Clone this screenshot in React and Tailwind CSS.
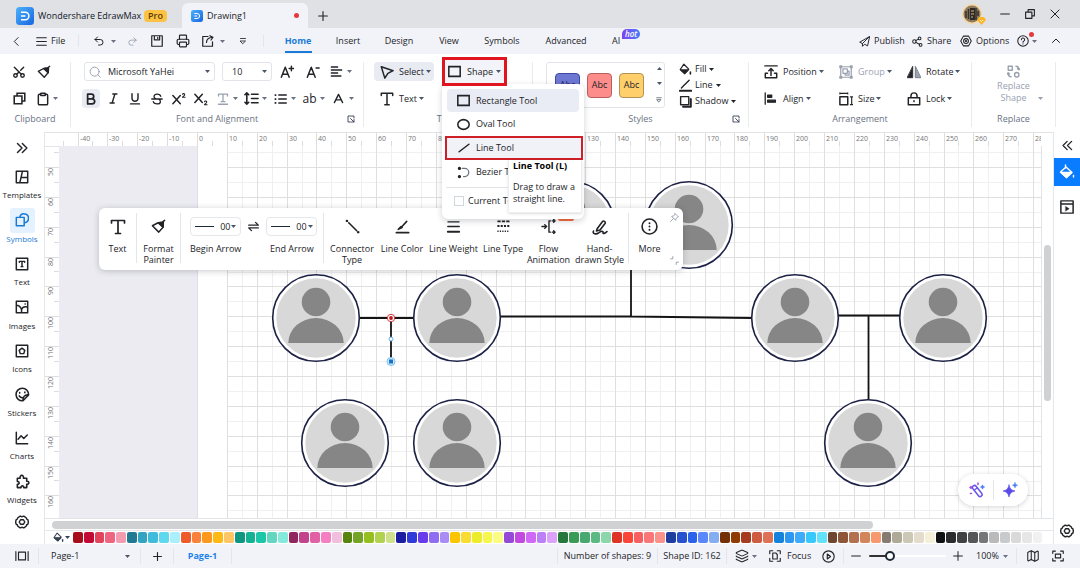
import React from 'react';
import clsx from 'clsx';
import { Undo2, Redo2, Printer, Layers, Map, Clipboard, Scissors } from 'lucide-react';

const Svg = ({ w = 14, box = 16, sw = 1.7, className, children }) => (
  <svg
    width={w}
    height={w}
    viewBox={`0 0 ${box} ${box}`}
    fill="none"
    stroke="currentColor"
    strokeWidth={sw}
    strokeLinecap="round"
    strokeLinejoin="round"
    className={clsx('shrink-0', className)}
    aria-hidden="true"
  >
    {children}
  </svg>
);

const Caret = ({ className }) => (
  <svg width="5" height="3" viewBox="0 0 5 3" className={clsx('shrink-0', className)} aria-hidden="true">
    <path d="M0 0h5L2.500 3z" fill="currentColor" />
  </svg>
);

const Divider = ({ className }) => <span className={clsx('w-px shrink-0 bg-[#e4e5ea]', className)} />;

/* ---------- icons ---------- */

const Logo = ({ size }) => (
  <svg width={size} height={size} viewBox="0 0 18 18" className="shrink-0" aria-hidden="true">
    <defs>
      <linearGradient id="logo" x1="0" y1="0" x2="1" y2="1">
        <stop offset="0" stopColor="#4db2fb" />
        <stop offset="1" stopColor="#1566e0" />
      </linearGradient>
    </defs>
    <rect width="18" height="18" rx="3.500" fill="url(#logo)" />
    <path d="M5 5.300h4.200a3.700 3.700 0 0 1 0 7.400H5M5 9h4.500" fill="none" stroke="#fff" strokeWidth="1.500" />
  </svg>
);

const HexGear = ({ w = 14 }) => (
  <Svg w={w} sw={1.600}>
    <path d="M5.500 1.500h1.200c.8.900 1.800.9 2.600 0h1.200l2.300 1.700c0 1.200.6 2 1.900 2.200l.6 2.600-.6 2.600c-1.300.2-1.900 1-1.900 2.200l-2.300 1.700H9.300c-.8-.9-1.800-.9-2.600 0H5.500l-2.300-1.700c0-1.200-.6-2-1.900-2.200L.7 8l.6-2.600c1.300-.2 1.900-1 1.900-2.200z" />
    <path d="M6.300 5.500h3.400L11.200 8l-1.500 2.500H6.300L4.800 8z" />
  </Svg>
);

const OptionsIcon = () => (
  <Svg w={12} sw={1.400}>
    <path d="M4.500 1.500h7L15 8l-3.500 6.500h-7L1 8z" />
    <circle cx="8" cy="8" r="3.200" />
    <circle cx="8" cy="8" r="0.800" />
  </Svg>
);

const Painter = ({ w = 14 }) => (
  <Svg w={w} sw={1.600}>
    <path d="M1.500 7.200 7.500 4l5.300 4.700L8.300 14 1.500 7.200z" />
    <path d="m8 4 4-.5 2.500-2M12.800 8.700l.2-4" />
    <path d="m8.500 4 4.300 4.500L13.200 3.500z" fill="currentColor" />
  </Svg>
);

const FillBucket = ({ w = 13 }) => (
  <Svg w={w} sw={1.500}>
    <path d="M6 1.500 12 7.500 7 13 1.500 8z" />
    <path d="M2 8.500h9.500L7 13z" fill="currentColor" />
    <path d="M14 11v2.500" strokeWidth="2" />
  </Svg>
);

const TextIcon = ({ w = 14 }) => (
  <Svg w={w} sw={1.700}>
    <path d="M1.500 4V1.500h13V4M8 1.500v13M5.500 14.500h5" />
  </Svg>
);

const LineHeightIcon = () => (
  <Svg w={15}>
    <path d="M3 2v12M1 4l2-2 2 2M1 12l2 2 2-2M8 3.500h7M8 8h7M8 12.500h7" />
  </Svg>
);

const BulletIcon = () => (
  <Svg w={14}>
    <path d="M5.500 3.500H14M5.500 8H14M5.500 12.500H14" />
    <path d="M1.500 3.500h.4M1.500 8h.4M1.500 12.500h.4" strokeWidth="2" />
  </Svg>
);

const AlignLines = () => (
  <Svg w={13} sw={1.900}>
    <path d="M1 2.500h9M1 6.200h14M1 9.800h9M1 13.500h13" strokeLinecap="butt" />
  </Svg>
);

const Launcher = () => (
  <Svg w={8} sw={1.800}>
    <path d="M7 14H2V2h12v4M7 7l7 7M14 9v5H9" />
  </Svg>
);

const CopyIcon = () => (
  <Svg w={13} sw={1.900}>
    <path d="M1.500 5h9.500v9.500H1.500zM5 5V1.500h9.500V11H11" strokeLinejoin="miter" />
  </Svg>
);

/* ---------- header ---------- */

const TitleBar = () => (
  <header className="flex h-7 items-end bg-[#e0e1e5]">
    <div className="flex h-7 w-[182px] items-center pl-4 pt-1">
      <Logo size={18} />
      <span className="ml-1 w-[106px] text-[9px] whitespace-nowrap text-gray-900">Wondershare EdrawMax</span>
      <span className="rounded-sm bg-[#fcc244] px-1 text-[9px] leading-3 font-semibold text-[#5c3b05]">Pro</span>
    </div>
    <div className="flex h-[25px] w-[126px] items-center rounded-t-md bg-[#f2f3f9] px-[9px]">
      <Logo size={12} />
      <span className="ml-1 text-[9px]">Drawing1</span>
      <span className="ml-auto size-[5px] rounded-full bg-[#e5393f]" />
    </div>
    <button aria-label="New tab" className="flex h-[25px] w-[30px] items-center justify-center">
      <Svg w={10} sw={1.800}><path d="M8 1v14M1 8h14" /></Svg>
    </button>
    <div className="ml-auto flex h-7 items-center pr-5">
      <span className="relative mr-[18px] size-5">
        <svg width="20" height="20" viewBox="0 0 20 20" aria-hidden="true">
          <circle cx="10" cy="10" r="10" fill="#f7d79b" />
          <circle cx="10" cy="10" r="8.500" fill="#8d7a60" />
          <path d="M4 7v7M6.500 5v10M14 4v12M16 7v5" stroke="#35312d" strokeWidth="1.500" />
          <path d="M8 4h5v12H8z" fill="#2e2a28" />
          <path d="M9 7h3M9 10h3M9 13h2" stroke="#d9b27a" />
        </svg>
        <svg width="9" height="8" viewBox="0 0 9 8" className="absolute -right-1 -bottom-px" aria-hidden="true">
          <path d="M2 0h5l2 3-4.500 5L0 3z" fill="#fdb52a" />
          <path d="m3 3 1.500 1.500L6 3" fill="none" stroke="#fff2c9" />
        </svg>
      </span>
      <div className="flex items-center gap-[15px]">
        <button aria-label="Minimize"><Svg w={10}><path d="M1 8h14" /></Svg></button>
        <button aria-label="Restore"><Svg w={10} sw={1.800}><path d="M1 5h10v10H1zM5 5V1h10v10h-4" /></Svg></button>
        <button aria-label="Close"><Svg w={10} sw={1.600}><path d="m1.500 1.500 13 13M14.500 1.500l-13 13" /></Svg></button>
      </div>
    </div>
  </header>
);

const TABS = [
  { name: 'Home', w: 'w-[50px]' },
  { name: 'Insert', w: 'w-[50px]' },
  { name: 'Design', w: 'w-[52px]' },
  { name: 'View', w: 'w-[48px]' },
  { name: 'Symbols', w: 'w-[58px]' },
  { name: 'Advanced', w: 'w-[70px]' },
];

const MenuBar = () => (
  <nav className="flex h-[26px] items-center bg-[#f2f3f9] text-[9px]">
    <button aria-label="Back" className="ml-3"><Svg w={9}><path d="M11 1 4 8l7 7" /></Svg></button>
    <button className="ml-[15px] flex w-[42px] items-center gap-1">
      <Svg w={11} sw={1.600}><path d="M1 2.500h14M1 8h14M1 13.500h14" /></Svg>
      File
    </button>
    <Divider className="h-3" />
    <div className="flex w-[184px] items-center pl-[14px]">
      <button aria-label="Undo" className="flex w-[34px] items-center gap-1.5"><Undo2 size={12} /><Caret className="text-gray-500" /></button>
      <button aria-label="Redo" className="w-[24px] text-gray-400"><Redo2 size={11} /></button>
      <button aria-label="Save" className="w-[25px]">
        <Svg w={12} sw={1.600}><path d="M1 1h14v14H1zM4.500 1v5.500h7V1M9 3v1.500" /></Svg>
      </button>
      <button aria-label="Print" className="w-[26px]"><Printer size={14} strokeWidth={2} /></button>
      <button aria-label="Export" className="flex w-[37px] items-center gap-1.5">
        <Svg w={12} sw={1.600}><path d="M8 2H1v13h13V9M6 10c0-4 3-6.500 8-7M10.500 1l4 2.200-2.500 3.500" /></Svg>
        <Caret className="text-gray-500" />
      </button>
      <button aria-label="Customize toolbar"><Svg w={8}><path d="M3 3h10M3 8h10l-5 5z" /></Svg></button>
    </div>
    <Divider className="h-3" />
    <div className="ml-[9px] flex h-full items-center">
      {TABS.map((tab, i) => (
        <button
          key={tab.name}
          className={clsx('relative flex h-full items-center justify-center', tab.w, i === 0 && 'font-bold text-[#1a7ad4]')}
        >
          {tab.name}
          {i === 0 && <span className="absolute bottom-px h-[2px] w-[27px] bg-[#1a7ad4]" />}
        </button>
      ))}
      <button className="relative ml-[11px]">
        AI
        <span className="absolute -top-[5px] left-[10px] rounded-full rounded-bl-none bg-linear-to-r from-[#7b3ff2] to-[#3d7bf7] px-[3px] text-[8px] leading-[10px] font-semibold text-white italic">hot</span>
      </button>
    </div>
    <div className="ml-auto flex items-center pr-5">
      <button className="flex w-[53px] items-center gap-1">
        <Svg w={11} sw={1.400}><path d="M15 1 1 9l4 2v4l3-3 4 2zM5 11l10-10" /></Svg>
        Publish
      </button>
      <button className="flex w-[48px] items-center gap-1">
        <Svg w={11} sw={1.500}>
          <circle cx="3.500" cy="8" r="2.500" /><circle cx="11" cy="3.500" r="2" /><circle cx="12.500" cy="13" r="2" />
          <path d="m5.500 6.800 3.800-2.200M5.500 9.300l5.200 2.700" />
        </Svg>
        Share
      </button>
      <button className="flex w-[57px] items-center gap-1"><OptionsIcon />Options</button>
      <button aria-label="Help" className="relative flex w-[35px] items-center gap-[3px]">
        <Svg w={12} sw={1.400}><circle cx="8" cy="8" r="7" /><path d="M5.800 6.200a2.200 2.200 0 1 1 3.200 2c-.7.300-1 .7-1 1.300M8 11.800v.2" /></Svg>
        <Caret className="text-gray-500" />
        <span className="absolute -top-[3px] left-3 size-[5px] rounded-full bg-[#e5393f]" />
      </button>
      <button aria-label="Collapse ribbon"><Svg w={8} sw={2}><path d="m1 11 7-7 7 7" /></Svg></button>
    </div>
  </nav>
);

/* ---------- ribbon ---------- */

const Group = ({ label, className, launcher, children }) => (
  <section className={clsx('relative flex shrink-0 flex-col border-r border-[#e9eaee]', className)}>
    <div className="flex-1">{children}</div>
    <div className="flex h-4 items-center justify-center text-[9px] text-gray-500">{label}</div>
    {launcher && <button aria-label={`${label} settings`} className="absolute right-2 bottom-1 text-gray-700"><Launcher /></button>}
  </section>
);

const Cell = ({ label, className, children }) => (
  <button aria-label={label} className={clsx('flex h-[19px] items-center justify-center rounded-sm', className)}>{children}</button>
);

const CaretCell = ({ label, className, children }) => (
  <button aria-label={label} className={clsx('flex h-[19px] w-6 items-center', className)}>
    <span className="flex w-[17px] items-center justify-center">{children}</span>
    <Caret className="ml-0.5 text-gray-500" />
  </button>
);

const LabelButton = ({ icon, text, className }) => (
  <button className={clsx('flex h-[19px] items-center gap-[5px] text-[9px] whitespace-nowrap', className)}>
    <span className="flex w-[15px] justify-center">{icon}</span>
    <span className="flex items-center gap-0.5">{text}<Caret className="text-gray-600" /></span>
  </button>
);

const ClipboardGroup = () => (
  <Group label="Clipboard" className="w-[71px]">
    <div className="flex gap-[5px] pl-[9px]">
      <Cell label="Cut" className="w-5"><Scissors size={14} strokeWidth={2.400} className="-rotate-90" /></Cell>
      <Cell label="Format painter" className="w-5"><Painter /></Cell>
    </div>
    <div className="mt-2 flex gap-[5px] pl-[9px]">
      <Cell label="Copy" className="w-5"><CopyIcon /></Cell>
      <CaretCell label="Paste"><Clipboard size={14} strokeWidth={2.500} /></CaretCell>
    </div>
  </Group>
);

const FontGroup = () => (
  <Group label="Font and Alignment" className="w-[293px]" launcher>
    <div className="flex items-center pl-[13px]">
      <label className="relative flex h-[19px] w-[131px] items-center rounded-[3px] border border-[#e3e4e9]">
        <Svg w={12} sw={1.300} className="ml-1 text-gray-400"><circle cx="7.500" cy="7.500" r="6" /><path d="m12 12 3 3" /></Svg>
        <select aria-label="Font family" className="w-full appearance-none pl-[7px] text-[9px] outline-none">
          <option>Microsoft YaHei</option>
        </select>
        <Caret className="absolute right-1 text-gray-600" />
      </label>
      <label className="relative ml-[7px] flex h-[19px] w-[50px] items-center rounded-[3px] border border-[#e3e4e9]">
        <select aria-label="Font size" className="w-full appearance-none pl-[9px] text-[9px] outline-none">
          <option>10</option>
        </select>
        <Caret className="absolute right-1 text-gray-600" />
      </label>
      <Cell label="Increase font size" className="ml-1 w-[22px]">
        <Svg w={14}><path d="m1.500 14 4.500-11.500L10.500 14M3 10.500h6M13 1.500v5M10.500 4h5" /></Svg>
      </Cell>
      <Cell label="Decrease font size" className="ml-1 w-[22px]">
        <Svg w={14}><path d="m1.500 14 4.500-11.500L10.500 14M3 10.500h6M11.500 3.500H15" /></Svg>
      </Cell>
      <CaretCell label="Alignment" className="ml-1"><AlignLines /></CaretCell>
    </div>
    <div className="mt-2 flex items-center pl-[11px]">
      <Cell label="Bold" className="mr-0.5 w-[18px] bg-[#e9ebf3]">
        <Svg w={12} sw={2.300}><path d="M3.500 1.500h5a3 3 0 0 1 0 6.200h-5zM3.500 7.700h6a3.400 3.400 0 0 1 0 6.800h-6z" /></Svg>
      </Cell>
      <Cell label="Italic" className="w-[22px]"><Svg w={11} sw={2}><path d="M7 1.500h6M3 14.500h6M10 1.500l-4 13" /></Svg></Cell>
      <Cell label="Underline" className="w-[22px]"><Svg w={12} sw={1.900}><path d="M4 1v6a4 4 0 0 0 8 0V1M2 14.500h12" /></Svg></Cell>
      <Cell label="Strikethrough" className="w-[22px]">
        <Svg w={12} sw={1.700}><path d="M13 4.500C12 .5 4 .5 4 4.500c0 2 2 3 4 3.500M1 8h14M3 11.500c1 4 9.500 4 9.500 0 0-1.500-.5-2.300-1.500-3" /></Svg>
      </Cell>
      <Cell label="Superscript" className="w-[22px]">
        <Svg w={14}><path d="m1 4 8.500 9.500M9.500 4 1 13.500" /><path d="M12 2.700c.5-1.400 2.800-1 2.500.5-.2 1-1.500 1.600-2.500 2.800h3" strokeWidth="1.200" /></Svg>
      </Cell>
      <Cell label="Subscript" className="mr-0.5 w-[22px]">
        <Svg w={14}><path d="m1 2.500 8.500 9.500M9.500 2.500 1 12" /><path d="M12 11.200c.5-1.400 2.800-1 2.500.5-.2 1-1.500 1.600-2.500 2.800h3" strokeWidth="1.200" /></Svg>
      </Cell>
      <div className="flex gap-[5px]">
        <CaretCell label="Text effect" className="text-gray-400"><Svg w={12}><path d="M2 4V1.500h12V4M8 1.500v10M5.500 11.500h5M2 15h12" /></Svg></CaretCell>
        <CaretCell label="Line spacing"><LineHeightIcon /></CaretCell>
        <CaretCell label="Bullets"><BulletIcon /></CaretCell>
        <CaretCell label="Letter case"><span className="text-xs">ab</span></CaretCell>
        <CaretCell label="Font color"><Svg w={11} sw={2}><path d="m2 14 6-12 6 12M4 10h8" /></Svg></CaretCell>
      </div>
    </div>
  </Group>
);

const RectIcon = () => <Svg w={13} sw={1.900}><path d="M1 2h14v12H1z" strokeLinejoin="miter" /></Svg>;

const SHAPE_MENU = [
  { text: 'Oval Tool', icon: <Svg w={13} sw={1.900}><ellipse cx="8" cy="8" rx="7" ry="6" /></Svg> },
  { text: 'Line Tool', icon: <Svg w={12} sw={2}><path d="M1.500 13 14.500 3" /></Svg>, marked: true },
  {
    text: 'Bezier Tool',
    icon: (
      <Svg w={13} sw={1.500}>
        <path d="M6.500 3H9.500a5 5 0 0 1 0 10H8" className="text-gray-500" stroke="currentColor" />
        <circle cx="3" cy="3" r="1.300" fill="currentColor" /><circle cx="3" cy="13" r="1.300" fill="currentColor" />
      </Svg>
    ),
  },
];

const ShapeMenu = () => (
  <div className="absolute top-[27px] left-0 w-[142px] rounded-md bg-white pt-[5px] shadow-[0_2px_6px_rgba(40,44,60,0.22)]">
    <button className="mx-[5px] flex h-[23px] w-[132px] items-center gap-1.5 rounded-sm bg-[#eaecf5] pl-[10px]"><RectIcon />Rectangle Tool</button>
    {SHAPE_MENU.map((item) => (
      <button
        key={item.text}
        className={clsx(
          'flex h-6 items-center whitespace-nowrap',
          item.marked
            ? 'ml-[3px] w-[138px] gap-1.5 border-2 border-[#cf2027] bg-[#f1f2f8] pl-[11px]'
            : 'w-full gap-1.5 pl-[15px]'
        )}
      >
        {item.icon}
        {item.text}
      </button>
    ))}
    <div className="mx-1 mt-[3px] border-t border-[#e3e4e8]" />
    <label className="flex h-[25px] items-center gap-1 pl-3 whitespace-nowrap">
      <input type="checkbox" className="size-[10px] appearance-none border border-gray-300 bg-white" />
      Current Tool
    </label>
    <div className="h-1.5" />
    <div role="tooltip" className="absolute top-[76px] left-[66px] h-[53px] w-[74px] border border-t-0 border-[#eceef2] bg-white pl-[4px] text-[9px] leading-3 shadow-sm">
      <div className="font-bold whitespace-nowrap text-black">Line Tool (L)</div>
      <div className="mt-[9px] whitespace-nowrap">Drag to draw a<br />straight line.</div>
    </div>
  </div>
);

const ToolsGroup = () => (
  <Group label="Tools" className="w-[169px]">
    <div className="flex">
      <div className="ml-[10px] flex flex-col gap-2">
        <LabelButton
          text="Select"
          className="w-[60px] rounded-sm bg-[#e9ebf3] pl-[5px]"
          icon={<Svg w={14}><path d="M1.500 2 15 6.500 9 9.500 5.500 15z" /></Svg>}
        />
        <LabelButton text="Text" className="pl-[5px]" icon={<TextIcon />} />
      </div>
      <div className="relative z-30 -mt-[5px] ml-2 h-[29px] w-[65px] text-[9px]">
        <button className="relative z-10 flex h-[29px] w-[65px] items-center gap-1.5 border-[3px] border-[#e0151f] bg-[#f3f4f9] pl-[3px]">
          <RectIcon />
          <span className="flex items-center gap-[3px]">Shape<Caret className="text-gray-600" /></span>
        </button>
        <ShapeMenu />
      </div>
    </div>
  </Group>
);

const StylesGroup = () => (
  <Group label="Styles" className="w-[216px]" launcher>
    <div className="flex">
      <div className="ml-[13px] flex h-[46px] w-[119px] items-center gap-[7px] rounded-[3px] border border-[#e3e4e9] pl-2 text-[9px]">
        <button className="size-[25px] shrink-0 rounded border border-[#3d4aa5] bg-[#6c78d2] text-[#1d2460]">Abc</button>
        <button className="size-[25px] shrink-0 rounded border border-[#b9605f] bg-[#fc8d8b]">Abc</button>
        <button className="size-[25px] shrink-0 rounded border border-[#b39352] bg-[#ffcf6c]">Abc</button>
        <div className="ml-[5px] flex flex-col items-center gap-3 text-gray-600">
          <Caret className="rotate-180" />
          <Caret />
          <Svg w={6} sw={2}><path d="M2 2h12M3 7h10l-5 6z" /></Svg>
        </div>
      </div>
      <div className="-mt-px ml-[14px] flex flex-col">
        <button className="flex h-4 items-center gap-[3px] text-[9px]"><FillBucket />Fill<Caret /></button>
        <button className="flex h-4 items-center gap-[3px] text-[9px]">
          <Svg w={13}><path d="M5 9 12.500 1.500M3 11l2-2" /><path d="M1 14.500h14" strokeWidth="2.500" /></Svg>
          Line<Caret />
        </button>
        <button className="flex h-4 items-center gap-[3px] text-[9px]">
          <Svg w={13}><path d="M2 2h10v10H2z" /><path d="M5 14.500h9.500V5" strokeWidth="2.500" /></Svg>
          Shadow<Caret />
        </button>
      </div>
    </div>
  </Group>
);

const ArrangeGroup = () => (
  <Group label="Arrangement" className="w-[223px]">
    <div className="grid grid-cols-[75px_68px_1fr] gap-y-2 pl-[14px]">
      <LabelButton
        text="Position"
        icon={<Svg w={14}><path d="M1 1h14M8 12V4M5.500 6.500 8 4l2.500 2.500M4 9.500H1.500v5h13v-5H12" /></Svg>}
      />
      <LabelButton
        text="Group"
        className="text-gray-400"
        icon={<Svg w={14} sw={1.400}><path d="M2 2h12v12H2zM1 1h2v2H1zM13 1h2v2h-2zM1 13h2v2H1zM13 13h2v2h-2zM4.500 4.500h5v5h-5zM7 9.500v2h4.500V7h-2" /></Svg>}
      />
      <LabelButton
        text="Rotate"
        icon={<Svg w={14} sw={1}><path d="M6.500 2v12.500h-6z" fill="currentColor" /><path d="M9.500 2v12.500h6z" fill="#9ca3af" stroke="#6b7280" /></Svg>}
      />
      <LabelButton
        text="Align"
        icon={<Svg w={13} sw={1.600}><path d="M1.500 1v14" /><path d="M4.500 4h5v2.500h-5zM4.500 10h9.500v2.500H4.500z" fill="currentColor" /></Svg>}
      />
      <LabelButton
        text="Size"
        icon={<Svg w={14}><path d="M1 5.500h9v9H1z" /><path d="M1 1.500h9M1 .8v1.500M10 .8v1.500M13 5.500h3M13 14.500h3M14.500 5.500v9" strokeWidth="1.300" /></Svg>}
      />
      <LabelButton
        text="Lock"
        icon={<Svg w={14}><path d="M1.500 6.500h13v8h-13zM4.500 6.500v-2a3.500 3.500 0 0 1 7 0v2M8 10v1" /></Svg>}
      />
    </div>
  </Group>
);

const ReplaceGroup = () => (
  <Group label="Replace" className="w-[84px]">
    <button className="relative flex w-full flex-col items-center pt-[3px] text-[9px] leading-3 text-gray-400">
      <Svg w={13} className="mb-0.5">
        <path d="M1.500 1.500h5v5h-5zM11 1.500c2 0 3.500 1 3.500 4M13 4.500l1.500 1.500L16 4.500M5 14.500c-2 0-3.500-1-3.500-4M0 11l1.500-1.500L3 11" />
        <circle cx="12" cy="12" r="2.700" />
      </Svg>
      Replace
      <span>Shape</span>
      <Caret className="absolute right-3 bottom-1" />
    </button>
  </Group>
);

const Ribbon = () => (
  <div className="relative z-30 flex h-[78px] bg-white pt-2 pb-[5px]">
    <ClipboardGroup />
    <FontGroup />
    <ToolsGroup />
    <StylesGroup />
    <ArrangeGroup />
    <ReplaceGroup />
  </div>
);

/* ---------- side bars ---------- */

const SIDE_ITEMS = [
  { name: 'Templates', icon: <Svg w={14}><path d="M1.500 1.500h13v13h-13zM8.500 1.500l-3 13M7 8.500h7.500" /></Svg> },
  { name: 'Symbols', icon: <Svg w={14}><path d="M1.500 5h9v9.500h-9zM5.500 5a5 5 0 1 1 5 6" /></Svg> },
  { name: 'Text', icon: <Svg w={14}><path d="M1.500 1.500h13v13h-13z" /><path d="M5 6V5h6v1M8 5v6M7 11h2" /></Svg> },
  { name: 'Images', icon: <Svg w={14}><path d="M1.500 1.500h13v13h-13zM1.500 6c4 0 5 2 6 5 1-3 3-4 7-3M7.500 11v3.500M11.500 4.500h.2" /></Svg> },
  { name: 'Icons', icon: <Svg w={14}><path d="M1.500 1.500h13v13h-13z" /><path d="m8 4.800 3.200 2.400L10 11H6L4.800 7.200z" /></Svg> },
  {
    name: 'Stickers',
    icon: <Svg w={15}><path d="M14.500 8.500A6.700 6.700 0 1 0 8.500 14.700M14.500 8.500c-4-.5-6.500 2-6 6.200l6-6.200M5 6v.5M10.500 5.500v.5M4.500 9.500c.8 1.500 2 2 3.500 2" /></Svg>,
  },
  { name: 'Charts', icon: <Svg w={14}><path d="M1.500 1.500v13h13M3.500 9.500l3.500-4L10 8.500l4-4" /></Svg> },
  {
    name: 'Widgets',
    icon: <Svg w={15}><path d="M2.500 4.500h3c-1-4 4.500-4 3.500 0h3.500v3.300c3-.5 3 3.700 0 3.200v3.500H9.200c.3-2.500-3-2.500-2.700 0H2.500v-3.500c2.500.3 2.500-3.200 0-3z" /></Svg>,
  },
];

const SideBar = () => (
  <aside className="flex w-[45px] shrink-0 flex-col items-center border-r border-[#e6e7eb] bg-white">
    <button aria-label="Expand panel" className="flex h-8 items-center">
      <Svg w={12} sw={1.900}><path d="m2 2 6 6-6 6M8.500 2l6 6-6 6" /></Svg>
    </button>
    <div className="flex w-full flex-1 flex-col">
      {SIDE_ITEMS.map(({ name, icon }) => (
        <button key={name} className={clsx('flex flex-1 flex-col items-center text-[8px] leading-[11px]', name === 'Symbols' && 'text-[#1a7ad4]')}>
          <span className={clsx('flex size-[25px] items-center justify-center rounded-[3px]', name === 'Symbols' && 'bg-[#e4f1fe]')}>{icon}</span>
          {name}
        </button>
      ))}
    </div>
    <button aria-label="Settings" className="flex h-8 pt-[3px]"><HexGear /></button>
  </aside>
);

const RightBar = () => (
  <aside className="flex w-[27px] shrink-0 flex-col items-center border-l border-[#e6e7eb] bg-white">
    <button aria-label="Collapse panel" className="flex h-[26px] items-center">
      <Svg w={11} sw={1.900}><path d="m7.500 2-6 6 6 6M14 2 8 8l6 6" /></Svg>
    </button>
    <button aria-label="Style" className="flex h-7 w-full items-center justify-center bg-[#0a7cff] text-white">
      <Svg w={16} sw={1.400}><path d="M6.500 1v3M7 3l6 5.500-5.500 5L1.500 8z" /><path d="M2 8.500h10.500l-5 5z" fill="currentColor" /><path d="M14.500 11.500v1.500" /></Svg>
    </button>
    <button aria-label="Slideshow" className="mt-3.5">
      <Svg w={14}><path d="M1 1h14v14H1zM1 4.500h14" /><path d="m6.500 7.500 4 2.500-4 2.500z" fill="currentColor" strokeWidth="0.500" /></Svg>
    </button>
    <button aria-label="Panel settings" className="mt-auto mb-1.5"><HexGear /></button>
  </aside>
);

/* ---------- canvas ---------- */

const STEP = 29.860;
const ORIGIN_X = 138;
const ORIGIN_Y = 21;
const range = (from, to) => Array.from({ length: to - from }, (_, i) => from + i);

const TopRuler = () => (
  <div className="border-t border-[#e3e4e8] bg-white pr-3">
    <svg className="block h-[13px] w-full" aria-hidden="true">
      {range(-5, 29).map((n) => {
        const x = Math.round(152 + n * STEP);
        const mid = Math.round(152 + (n + 0.5) * STEP);
        return (
          <g key={n}>
            {x > 14 && <path d={`M${x}.5 0v14`} stroke="#dcdde1" />}
            {mid > 14 && <path d={`M${mid}.5 8v6`} stroke="#dcdde1" />}
            {n > -5 && <text x={x + 2} y="8" className="fill-[#777] text-[7px]">{n * 10}</text>}
          </g>
        );
      })}
    </svg>
  </div>
);

const LeftRuler = () => (
  <svg className="h-full w-3.5 shrink-0 border-t border-[#e3e4e8] bg-white" aria-hidden="true">
    {range(0, 12).map((n) => {
      const y = Math.round(ORIGIN_Y - 1 + n * STEP);
      return (
        <g key={n}>
          <path d={`M0 ${y}.5h14M9 ${y - 15}.5h5`} stroke="#dcdde1" />
          <text transform={`translate(8 ${y + 1}) rotate(-90)`} textAnchor="end" className="fill-[#777] text-[7px]">{50 + n * 10}</text>
        </g>
      );
    })}
  </svg>
);

const PEOPLE = [
  [512, 79], [630, 79],
  [257, 172], [398, 172], [736, 172], [884, 172],
  [286, 297], [398, 297], [809, 297],
];

const Person = ({ x, y }) => (
  <g transform={`translate(${x} ${y})`}>
    <circle r="43.300" fill="#fff" stroke="#1d2145" strokeWidth="1.600" />
    <circle r="39.700" fill="#d8d8d8" />
    <circle cy="-16" r="14.300" fill="#868686" />
    <path d="M-27.700 25A27.700 25 0 0 1 27.700 25z" fill="#868686" />
  </g>
);

const Drawing = () => (
  <svg className="block h-full w-full bg-[#ebebf1]" role="img" aria-label="Family tree">
    <rect x={ORIGIN_X} width="100%" height="100%" fill="#fff" />
    <path d={`M${ORIGIN_X}.5 0v2000`} stroke="#dedfe4" />
    {range(1, 60).map((n) => (
      <path key={`mv${n}`} d={`M${Math.round(ORIGIN_X + (n + 0.5) * STEP)}.5 0v2000`} stroke="#f0f0f0" />
    ))}
    {range(-1, 40).map((n) => (
      <path key={`mh${n}`} d={`M168 ${Math.round(ORIGIN_Y + (n + 0.5) * STEP)}.5h3000`} stroke="#f0f0f0" />
    ))}
    {range(1, 60).map((n) => (
      <path key={`v${n}`} d={`M${Math.round(ORIGIN_X + n * STEP)}.5 0v2000`} stroke="#dfdfdf" />
    ))}
    {range(0, 40).map((n) => (
      <path key={`h${n}`} d={`M168 ${Math.round(ORIGIN_Y + n * STEP)}.5h3000`} stroke="#dfdfdf" />
    ))}
    <g stroke="#141414" strokeWidth="1.800" fill="none">
      <path d="M300 172h56M440 170.500h132L694 172M572 90v80M778 169.500h64M809.500 170v84M332 172v43" />
    </g>
    {PEOPLE.map(([x, y]) => <Person key={`${x}-${y}`} x={x} y={y} />)}
    <circle cx="332" cy="172" r="3.700" fill="#fff" stroke="#d2383d" />
    <circle cx="332" cy="172" r="1.900" fill="#c4161c" />
    <circle cx="332" cy="193" r="2" fill="#fff" stroke="#5db0ea" />
    <circle cx="332" cy="215.500" r="4" fill="#cfe8fb" stroke="#7cc0f2" />
    <path d="M330 213.500h4v4h-4z" fill="#1673c9" />
  </svg>
);

const ArrowPicker = ({ label }) => (
  <div className="flex flex-col items-center">
    <button aria-label={label} className="flex h-[19px] w-[51px] items-center rounded border border-[#e6e7eb] pl-[4px]">
      <span className="h-px w-[19px] bg-gray-800" />
      <span className="ml-[6px] mr-px">00</span>
      <Caret className="text-gray-600" />
    </button>
    <span className="mt-[7px] whitespace-nowrap">{label}</span>
  </div>
);

const FloatItem = ({ icon, lines, className }) => (
  <button className={clsx('relative flex shrink-0 flex-col items-center', className)}>
    <span className="flex h-[19px] items-center">{icon}</span>
    <span className="mt-[7px] flex flex-col items-center whitespace-nowrap">
      {lines.map((line) => <span key={line}>{line}</span>)}
    </span>
  </button>
);

const FloatingToolbar = () => (
  <div className="absolute top-[76px] left-[54px] z-20 flex w-[584px] rounded-md bg-white pt-[9px] pb-[5px] text-[9px] leading-[11px] shadow-[0_1px_6px_rgba(40,44,60,0.25)]">
    <FloatItem className="w-[37px]" lines={['Text']} icon={<TextIcon w={16} />} />
    <Divider className="-mt-1 h-[50px]" />
    <FloatItem className="w-[43px]" lines={['Format', 'Painter']} icon={<Painter w={15} />} />
    <Divider className="-mt-1 h-[50px]" />
    <div className="flex w-[142px] pl-[9px]">
      <ArrowPicker label="Begin Arrow" />
      <button aria-label="Swap arrows" className="flex h-[19px] w-[25px] items-center justify-center">
        <Svg w={11} sw={1.900}><path d="M1 6h14l-4-4M15 10H1l4 4" /></Svg>
      </button>
      <ArrowPicker label="End Arrow" />
    </div>
    <Divider className="-mt-1 h-[50px]" />
    <FloatItem
      className="ml-[3px] w-[50px]"
      lines={['Connector', 'Type']}
      icon={<Svg w={15}><path d="m4 4 8.500 8.500" /><path d="M2 2h.2M14 14h.2" strokeWidth="2.500" /></Svg>}
    />
    <FloatItem
      className="w-[50px]"
      lines={['Line Color']}
      icon={<Svg w={15}><path d="M7 8.500 12.500 2.500" strokeWidth="1.700" /><path d="m3.500 11 3-3 1 1.200z" fill="currentColor" /><path d="M1.500 14.500h13" strokeWidth="2" /></Svg>}
    />
    <FloatItem
      className="w-[53px]"
      lines={['Line Weight']}
      icon={<Svg w={15}><path d="M2 3h12" strokeWidth="1.200" /><path d="M2 8h12" /><path d="M2 13.500h12" strokeWidth="2.200" /></Svg>}
    />
    <FloatItem
      className="w-[46px]"
      lines={['Line Type']}
      icon={
        <Svg w={15}>
          <g strokeLinecap="butt">
            <path d="M1.500 2.500h13" strokeDasharray="3.500 1.200" />
            <path d="M1.500 7.500h13" strokeWidth="2" strokeDasharray="2.200 1.300" />
            <path d="M1.500 13h13" strokeDasharray="1.300 1.300" />
          </g>
        </Svg>
      }
    />
    <FloatItem
      className="w-[45px]"
      lines={['Flow', 'Animation']}
      icon={
        <>
          <Svg w={15} sw={1.500}><path d="M1 8h5M4 6l2 2-2 2M8.500 14V2M8.500 2h1.500M12 2h3M8.500 14h1.500M12 14h3M13.500 .5 15 2l-1.500 1.500M13.500 12.500 15 14l-1.500 1.500" /></Svg>
          <span className="absolute -top-1 -right-[3px] h-2 w-4 rounded-xs bg-[#f56a3c]" />
        </>
      }
    />
    <FloatItem
      className="w-[57px]"
      lines={['Hand-', 'drawn Style']}
      icon={<Svg w={16} sw={1.600}><path d="M5 10 10.500 2.500c1-1.300 3.500.5 2.500 2L8 11l-3.500 1zM1.500 12c-1.500 3 3 3.500 5 2 2.500-2 5-2.500 4.500-.5-.3 1.500 2 1.200 4-1" /></Svg>}
    />
    <Divider className="-mt-1 h-[50px]" />
    <FloatItem
      className="w-[41px]"
      lines={['More']}
      icon={<Svg w={17} sw={1.500}><circle cx="8" cy="8" r="7" /><path d="M8 4.800v.2M8 7.900v.2M8 11v.2" strokeWidth="1.800" /></Svg>}
    />
    <div className="-mt-1 flex flex-col justify-between text-gray-400">
      <button aria-label="Pin"><Svg w={9}><path d="m9 1 6 6-2 .5-2.500 3L10 13 3 6l2.500-.5 3-2.500zM6 10l-5 5" /></Svg></button>
      <button aria-label="Collapse"><Svg w={9}><path d="M1 5h4V1M11 15v-4h4" /></Svg></button>
    </div>
  </div>
);

const COLORS = [
  '#a80d1b', '#c10a35', '#e2445c', '#ef6480', '#f49bb0', '#227a92', '#30a4c0', '#3fbbdb', '#5dd8ee', '#a9effc',
  '#ef5a2a', '#f9813a', '#fb981d', '#feb913', '#fdc563', '#0e9680', '#13b295', '#1cc7a8', '#63d6c0', '#85eadb',
  '#91265f', '#c2428c', '#e062a5', '#f67fc4', '#efbfdd', '#56850e', '#74a328', '#95bf1e', '#b1d150', '#cfe08d',
  '#1a1da0', '#2e3bd8', '#683ceb', '#8f6cf2', '#a98df4', '#fcc502', '#fadb30', '#ecec2c', '#f6f74d', '#fbfd83',
  '#9549d6', '#c248e1', '#cf68f5', '#bb80f8', '#dba1fb', '#25773c', '#389c54', '#49a870', '#5bb984', '#8bd6ab',
  '#dd3425', '#fb4537', '#f75f60', '#fa7677', '#fb918b', '#1e3d9e', '#2751ce', '#2b62ec', '#5a88fb', '#84adf2',
  '#733008', '#8f3a00', '#a73b20', '#ce5c42', '#dd7257', '#1583dc', '#2e97f1', '#3fabfb', '#38c8fc', '#63e2fc',
  '#6d4530', '#8d5639', '#b4714f', '#d2855d', '#f7986d', '#857b73', '#afaa97', '#cbc8b5', '#e3dccd', '#f5efd8',
  '#0e1011', '#2a2b2c', '#404143', '#555657', '#757677', '#bababb', '#c9cacb', '#d9d9da', '#e6e6e7', '#f1f1f2',
];

const Palette = () => (
  <div className="flex h-3.5 items-center border-t border-[#e6e7eb] bg-white pr-[11px] pl-2">
    <button aria-label="Fill color" className="flex w-5 shrink-0 items-center gap-px text-gray-700"><FillBucket w={11} /><Caret /></button>
    <div className="flex flex-1 gap-px">
      {COLORS.map((color) => (
        <button key={color} aria-label={color} className="h-[11px] flex-1 rounded-[2px]" style={{ backgroundColor: color }} />
      ))}
    </div>
  </div>
);

const Workspace = () => (
  <main className="relative flex min-w-0 flex-1 flex-col overflow-hidden">
    <TopRuler />
    <div className="flex min-h-0 flex-1">
      <LeftRuler />
      <div className="min-w-0 flex-1"><Drawing /></div>
      <div className="w-3 shrink-0 border-l border-[#e3e4e8] bg-white px-0.5 pt-[99px]">
        <div className="h-[156px] rounded-full bg-[#d0d1d3]" />
      </div>
    </div>
    <div className="h-3 border-t border-[#e3e4e8] bg-white pt-0.5 pl-[7px]">
      <div className="h-2 w-[82%] rounded-full bg-[#d0d1d3]" />
    </div>
    <Palette />
    <FloatingToolbar />
    <div className="absolute right-[25px] bottom-[38px] flex h-8 w-[70px] items-center justify-center gap-2 rounded-full bg-white text-[#5b4be8] shadow-[0_1px_5px_rgba(40,44,60,0.2)]">
      <button aria-label="Magic wand">
        <Svg w={16} sw={1.500}>
          <rect x="6.300" y="2.500" width="4" height="13" rx="2" transform="rotate(-38 8.300 9)" stroke="#6a55ea" />
          <path d="M5.500 8 8.300 5.800" stroke="#6a55ea" strokeWidth="1.200" />
          <path d="M2 4.500v2M1 5.500h2M9 1v1.500M1.500 11.500h1" stroke="#9a4fe0" />
          <path d="M13.500 3.500v3M12 5h3" stroke="#4a7cf5" />
        </Svg>
      </button>
      <Divider className="h-5" />
      <button aria-label="AI assistant">
        <Svg w={16} sw={0.600}>
          <path d="M7 3c1 3.800 2.200 5 6 6-3.800 1-5 2.200-6 6-1-3.800-2.200-5-6-6 3.800-1 5-2.200 6-6z" fill="currentColor" />
          <path d="M13 .8c.5 1.600.9 2 2.500 2.500-1.600.5-2 .9-2.500 2.500-.5-1.600-.9-2-2.500-2.500 1.600-.5 2-.9 2.500-2.500z" fill="#4a7cf5" stroke="#4a7cf5" />
        </Svg>
      </button>
    </div>
  </main>
);

/* ---------- status bar ---------- */

const StatusBar = () => (
  <footer className="flex h-6 items-center bg-[#f2f3f9] text-[9px]">
    <button aria-label="Toggle view" className="ml-[15px]"><Svg w={14} sw={1.300}><path d="M1 3v10M15 3v10M4 3.500h8v9H4z" /></Svg></button>
    <Divider className="ml-[9px] h-4" />
    <label className="relative flex w-[101px] items-center">
      <select aria-label="Page" className="w-full appearance-none pl-3 outline-none"><option>Page-1</option></select>
      <Caret className="absolute right-2.5 text-gray-600" />
    </label>
    <Divider className="h-4" />
    <button aria-label="Add page" className="flex w-8 justify-center"><Svg w={9} sw={2}><path d="M8 1v14M1 8h14" /></Svg></button>
    <Divider className="h-4" />
    <button className="w-[57px] font-bold text-[#1a82ea]">Page-1</button>
    <Divider className="h-4" />
    <div className="ml-auto flex items-center">
      <Divider className="h-4" />
      <span className="w-[99px] text-center whitespace-nowrap">Number of shapes: 9</span>
      <Divider className="h-4" />
      <span className="w-[68px] text-center whitespace-nowrap">Shape ID: 162</span>
      <Divider className="h-4" />
      <button aria-label="Layers" className="ml-2 flex items-center gap-[3px]"><Layers size={14} strokeWidth={1.800} /><Caret className="text-gray-500" /></button>
      <button className="ml-3 flex w-[53px] items-center gap-1.5">
        <Svg w={12} sw={1.500}><path d="M1 5V1h4M11 1h4v4M15 11v4h-4M5 15H1v-4M5 4h4l2 2v6H5z" /></Svg>
        Focus
      </button>
      <button aria-label="Play"><Svg w={13} sw={1.400}><circle cx="8" cy="8" r="7" /><path d="m6.500 5 4 3-4 3z" /></Svg></button>
      <Divider className="ml-2 h-4" />
      <button aria-label="Zoom out" className="ml-[7px]"><Svg w={10} sw={1.600}><path d="M1 8h14" /></Svg></button>
      <input
        type="range"
        aria-label="Zoom"
        defaultValue="24"
        className="ml-2 h-[2px] w-[77px] appearance-none rounded-full bg-[linear-gradient(to_right,#333_25%,#fff_25%)] [&::-webkit-slider-thumb]:size-[10px] [&::-webkit-slider-thumb]:appearance-none [&::-webkit-slider-thumb]:rounded-full [&::-webkit-slider-thumb]:border-2 [&::-webkit-slider-thumb]:border-gray-800 [&::-webkit-slider-thumb]:bg-white"
      />
      <button aria-label="Zoom in" className="ml-[7px]"><Svg w={10} sw={1.600}><path d="M8 1v14M1 8h14" /></Svg></button>
      <button className="ml-[13px] flex w-10 items-center gap-1">100%<Caret className="text-gray-500" /></button>
      <Divider className="h-4" />
      <button aria-label="Overview map" className="ml-[9px]"><Map size={14} strokeWidth={1.800} /></button>
      <button aria-label="Fit to screen" className="mr-4 ml-3">
        <Svg w={12} sw={1.500}><path d="M1 4.500V1.500h3.500M11.500 1.500H15v3M15 11.500v3h-3.500M4.500 14.500H1v-3M4.500 5.500h7v5h-7z" /></Svg>
      </button>
    </div>
  </footer>
);

const App = () => (
  <div className="flex h-screen flex-col overflow-hidden bg-white font-['Open_Sans','Noto_Sans',sans-serif] text-[#222327]">
    <TitleBar />
    <MenuBar />
    <Ribbon />
    <div className="flex min-h-0 flex-1">
      <SideBar />
      <Workspace />
      <RightBar />
    </div>
    <StatusBar />
  </div>
);

export default App;
